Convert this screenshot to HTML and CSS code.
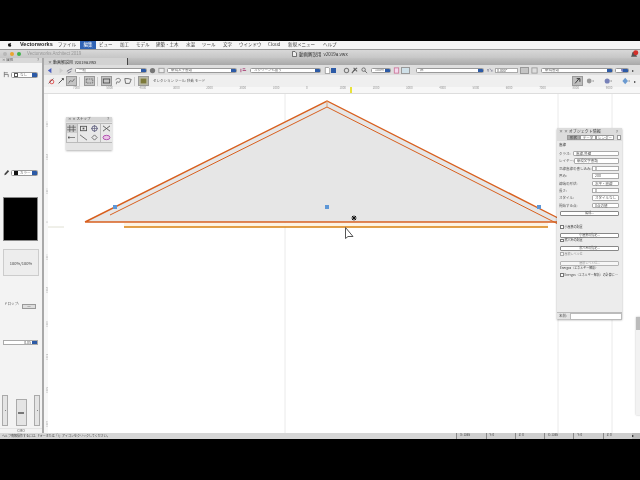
FILE: index.html
```html
<!DOCTYPE html>
<html lang="ja">
<head>
<meta charset="utf-8">
<title>Vectorworks</title>
<link rel="stylesheet" href="styles.css">
</head>
<body>
<div class="app">
  <div class="menubar">
    <svg class="apple" viewBox="0 0 10 10"><path d="M7 1.500 5.400 3C4 2.400 2 3 2 5.400 2 7.600 3.400 9.500 4.300 9.300 5 9.100 5.500 9.100 6.200 9.300 7 9.500 8.200 8 8.600 6.800 7 6 7 4 8.400 3.400 7.700 2.600 6.600 2.600 5.400 3 5.500 2.200 6 1.700 7 1.500Z"/></svg>
    <span class="m-brand">Vectorworks</span>
    <span class="m w18">ファイル</span>
    <span class="m active">編集</span>
    <span class="m w14 g3">ビュー</span>
    <span class="m w9 g7">加工</span>
    <span class="m w12 g7">モデル</span>
    <span class="m w23 g8">建築・土木</span>
    <span class="m w9 g7">水温</span>
    <span class="m w14 g7">ツール</span>
    <span class="m w9 g7">文字</span>
    <span class="m w22 g7">ウインドウ</span>
    <span class="m w14 g7">Cloud</span>
    <span class="m w28 g6">新規メニュー</span>
    <span class="m w14 g7">ヘルプ</span>
  </div>
  <div class="titlebar">
    <i class="light grey"></i><i class="light amber"></i><i class="light green"></i>
    <span class="app-name">Vectorworks Architect 2019</span>
    <svg class="doc-icon" viewBox="0 0 5 6"><path d="M.5.5H3L4.500 2V5.500H.5Z" fill="#eee" stroke="#444" stroke-width=".7"/></svg>
    <span class="doc-name">動画解説用&nbsp; v2019a.vwx</span>
    <svg class="bell" viewBox="0 0 10 9"><path d="M1 7.500C2 6.500 2 4.500 2.500 3 3 1.500 6 1.500 6.500 3 7 4.500 7 6.500 8 7.500Z" fill="#555"/><circle cx="6.500" cy="3" r="2.800" fill="#d3302a"/></svg>
  </div>
  <div class="main">
    <aside class="attrs">
      <div class="panel-title"><span>× 属性</span><span>?</span></div>
      <div class="attr-row first">
        <svg class="attr-icon" viewBox="0 0 7 8"><path d="M1 1V7M1 4H5.500V7M1 2H5" fill="none" stroke="#666" stroke-width=".8"/></svg>
        <span class="select"><i class="mini-white"></i><span>なし</span><b></b></span>
      </div>
      <div class="attr-row pen">
        <svg class="attr-icon" viewBox="0 0 7 8"><path d="M1 7 1.500 5 5 1 6.500 2.500 2.800 6.500Z" fill="#444"/></svg>
        <span class="select"><i class="mini-black"></i><span>カラー</span><b></b></span>
      </div>
      <div class="swatch"></div>
      <div class="preview">100%/100%</div>
      <div class="drop"><span>ドロップ:</span><span class="drop-box">一</span></div>
      <div class="opacity"><span>0.05</span><b></b></div>
      <div class="sliders">
        <span class="slider s-side"><i></i></span>
        <span class="slider s-mid"><i></i></span>
        <span class="slider s-side"><i></i></span>
      </div>
      <div class="cmo">CMO</div>
    </aside>
    <div class="divider"></div>
    <div class="workspace">
      <div class="tabs">
        <span class="tab">× 動画解説用&nbsp; v2019a.vwx</span>
      </div>
      <div class="bar1">
        <svg class="ic ml3" viewBox="0 0 8 8"><path d="M1 4 5 1V7Z" fill="#4a5fc0"/></svg>
        <svg class="ic ml3" viewBox="0 0 8 8"><path d="M7 4 3 1V7Z" fill="#ccc"/></svg>
        <svg class="ic ml2" viewBox="0 0 8 8"><path d="M1 5 4 3 7 2M2 7 6 5" stroke="#667" fill="none"/></svg>
        <span class="select sel1"><span>一般</span><b></b></span>
        <svg class="ic ml2" viewBox="0 0 8 8"><circle cx="4" cy="4" r="3" fill="#777"/></svg>
        <svg class="ic ml2" viewBox="0 0 8 8"><rect x="1" y="1.500" width="6" height="5" fill="#eee" stroke="#999"/></svg>
        <span class="select sel2"><span>新規文字書類</span><b></b></span>
        <svg class="ic ml3" viewBox="0 0 8 8"><path d="M1 2V6M3 2 6 2M3 4H7" stroke="#a47" stroke-width="1"/></svg>
        <span class="select sel3"><span>スクリーン七面り</span><b></b></span>
        <svg class="ic ml3" viewBox="0 0 8 8"><path d="M1.500.5H5L6.500 2V7.500H1.500Z" fill="#fff" stroke="#777" stroke-width=".7"/></svg>
        <b class="blue-btn"></b>
        <svg class="ic ml7" viewBox="0 0 8 8"><circle cx="4" cy="4" r="2.500" fill="none" stroke="#777" stroke-width="1.200"/></svg>
        <svg class="ic ml1" viewBox="0 0 8 8"><path d="M1 7 4 3 7 1M3 1 7 5" stroke="#666" stroke-width="1.200"/></svg>
        <svg class="ic ml3" viewBox="0 0 8 8"><circle cx="3" cy="3" r="2" fill="none" stroke="#666"/><path d="M4.500 4.500 7 7" stroke="#666"/></svg>
        <span class="select sel4"><span>100%</span><b></b></span>
        <svg class="ic ml2" viewBox="0 0 8 8"><rect x="1.500" y="1" width="5" height="6" fill="#f4d9ee" stroke="#c79"/></svg>
        <span class="hl hl-blue"></span>
        <span class="select sel5"><span>床</span><b></b></span>
        <span class="yz">Y↘</span>
        <span class="field f23">0.000"</span>
        <span class="hl toggle"></span>
        <svg class="ic ml2" viewBox="0 0 8 8"><rect x="1" y="1" width="6" height="6" fill="none" stroke="#999"/></svg>
        <span class="select sel6"><span>新規書類</span><b></b></span>
        <span class="select sel7"><i class="purple"></i><b></b></span>
        <span class="more">▸</span>
      </div>
      <div class="bar2">
        <svg class="ic2 ml3" viewBox="0 0 10 10"><path d="M2 8 8 2" stroke="#444"/><circle cx="6" cy="6" r="2.500" fill="none" stroke="#d33"/></svg>
        <svg class="ic2 ml2" viewBox="0 0 10 10"><path d="M2 8 8 2M6 2H8V4" stroke="#333" fill="none"/></svg>
        <span class="hl tool"><svg viewBox="0 0 10 10"><path d="M1 8 4 4 6 6 9 2" stroke="#444" stroke-dasharray="1.500 .7" fill="none"/></svg></span>
        <span class="sep sep-wide"></span>
        <span class="hl tool wide"><svg viewBox="0 0 10 10"><rect x="1" y="2.500" width="8" height="5" fill="none" stroke="#666" stroke-dasharray="2 1"/></svg></span>
        <span class="sep"></span>
        <span class="hl tool"><svg viewBox="0 0 10 10"><rect x="1" y="2.500" width="8" height="5" fill="none" stroke="#444"/></svg></span>
        <svg class="ic2 ml2" viewBox="0 0 10 10"><path d="M2 4C3 1 8 1 8 4S5 7 4 6 3 9 3 9" fill="none" stroke="#666"/></svg>
        <svg class="ic2 ml2" viewBox="0 0 10 10"><path d="M1 2H5L9 3 7 8H2Z" fill="none" stroke="#555"/></svg>
        <span class="sep"></span>
        <span class="hl tool olive"><svg viewBox="0 0 10 10"><rect x="1.500" y="2" width="7" height="6" fill="#7d7a3a"/></svg></span>
        <span class="mode">セレクション ツール: 移動 モード</span>
        <span class="hl tool right-first"><svg viewBox="0 0 10 10"><path d="M2 8 7 2M4 2H8L8 6" stroke="#222" fill="none"/></svg></span>
        <svg class="ic2 ml3" viewBox="0 0 10 10"><circle cx="4" cy="5" r="3" fill="#999"/><path d="M8 5H10" stroke="#777"/></svg>
        <svg class="ic2 ml8" viewBox="0 0 10 10"><circle cx="4" cy="5" r="3.200" fill="#7781b8"/><path d="M8 5H10" stroke="#777"/></svg>
        <svg class="ic2 ml8" viewBox="0 0 10 10"><path d="M4 1 7.500 5 4 9 .5 5Z" fill="#6b9ad0"/><path d="M8 5H10" stroke="#777"/></svg>
        <span class="more more2">▸</span>
      </div>
      <div class="ruler">
        <span>7000</span><span>5000</span><span>4000</span><span>3000</span><span>2000</span><span>3000</span><span>1000</span><span>0</span><span>1000</span><span>2000</span><span>3000</span><span>4000</span><span>5000</span><span>6000</span><span>7000</span><span>8000</span><span>9000</span>
        <i class="ruler-mark"></i>
      </div>
      <div class="canvas-row">
        <div class="vruler">
          <span>1000</span><span>2000</span><span>1000</span><span>0</span><span>1000</span><span>2000</span><span>3000</span><span>4000</span><span>5000</span><span>6000</span>
        </div>
        <div class="canvas">
          <svg class="drawing" viewBox="48 94 592 339">
            <path d="M285 94V433M558 94V433M612 94V433" stroke="#e4e4e4" stroke-width=".8" fill="none"/>
            <path d="M48 227H64" stroke="#d8d8c8" stroke-width=".8"/>
            <path d="M85 222 327 101 560 219V222Z" fill="#e6e6e6"/>
            <path d="M85 222 327 101 560 219M85 222H560" fill="none" stroke="#d8601f" stroke-width="1.400"/>
            <path d="M110 215 327 107 558 224" fill="none" stroke="#d8601f" stroke-width="1"/>
            <path d="M327 101V107" stroke="#e3a070" stroke-width="1"/>
            <rect x="124" y="223" width="424" height="4" fill="#fdf3e3"/>
            <path d="M124 227H548" stroke="#d9820f" stroke-width="1.400"/>
            <rect x="113" y="205" width="4" height="4" fill="#5e97d6"/>
            <rect x="325" y="205" width="4" height="4" fill="#5e97d6"/>
            <rect x="537" y="205" width="4" height="4" fill="#5e97d6"/>
            <path d="M352 216 356 220M356 216 352 220M354 215.500V220.500M351.500 218H356.500" stroke="#111" stroke-width="1"/>
            <path d="M345.500 227.500V238.500L348 236.500 353 236.500Z" fill="#fff" stroke="#555" stroke-width="1"/>
          </svg>
          <span class="v-mark"></span>
          <section class="snap">
            <div class="snap-title"><span>× × スナップ</span><span>?</span></div>
            <div class="snap-grid">
              <span class="cell on"><svg viewBox="0 0 10 8"><path d="M3 0V8M7 0V8M0 2.500H10M0 5.500H10" stroke="#555" stroke-width=".8"/></svg></span>
              <span class="cell"><svg viewBox="0 0 10 8"><rect x="1.500" y="1.500" width="7" height="5" fill="none" stroke="#555"/><rect x="4" y="3" width="2" height="2" fill="#555"/></svg></span>
              <span class="cell"><svg viewBox="0 0 10 8"><circle cx="5" cy="4" r="3" fill="none" stroke="#557"/><path d="M5 0V8M1 4H9" stroke="#557" stroke-width=".7"/></svg></span>
              <span class="cell"><svg viewBox="0 0 10 8"><path d="M1 1 9 7M9 1 1 7" stroke="#555"/></svg></span>
              <span class="cell"><svg viewBox="0 0 10 8"><rect x="1" y="3" width="2" height="2" fill="#555"/><path d="M3 4H9" stroke="#777"/></svg></span>
              <span class="cell"><svg viewBox="0 0 10 8"><path d="M1 1 9 7" stroke="#666"/></svg></span>
              <span class="cell"><svg viewBox="0 0 10 8"><path d="M5 1 8 4 5 7 2 4Z" fill="none" stroke="#666"/></svg></span>
              <span class="cell"><svg viewBox="0 0 10 8"><ellipse cx="5" cy="4" rx="4" ry="2.500" fill="#eac5e6" stroke="#a4a"/></svg></span>
            </div>
          </section>
          <section class="oip">
            <div class="oip-title"><span>× × オブジェクト情報</span><span>?</span></div>
            <div class="oip-tabs"><span class="sel">形状</span><span>データ</span><span>レンダー</span><i class="oip-square"></i></div>
            <div class="oip-body">
              <div class="oip-head">直線</div>
              <div class="row"><label>クラス:</label><span class="pop w-long">直線-外壁</span></div>
              <div class="row"><label>レイヤー:</label><span class="pop w-long">新規文字書類</span></div>
              <div class="row"><label>芯線直線の書し込み:</label><span class="inp w-mid">0</span></div>
              <div class="row"><label>厚み:</label><span class="inp w-mid">200</span></div>
              <div class="row"><label>線端の形状:</label><span class="pop w-mid">水平・直線</span></div>
              <div class="row"><label>長さ:</label><span class="inp w-mid">0</span></div>
              <div class="row"><label>スタイル:</label><span class="pop w-mid">スタイルなし</span></div>
              <div class="row"><label>開始する点:</label><span class="pop w-mid">0点の値</span></div>
              <div class="btn">編成...</div>
              <div class="check chk-first"><i></i>小屋裏の配置</div>
              <div class="btn btn-tight">小屋裏の指定...</div>
              <div class="check"><i></i>窓穴あの配置</div>
              <div class="btn btn-tight">窓穴あの指定...</div>
              <div class="check dim"><i></i>屋根レベル位</div>
              <div class="btn btn-tight btn-last dim">屋根レベル位...</div>
              <div class="energos">Energos（エネルギー解析）</div>
              <div class="check"><i></i>Energos（エネルギー解析）の計算に…</div>
              <div class="name-row"><label>名前:</label><span class="name-input"></span></div>
            </div>
          </section>
          <section class="peek"></section>
        </div>
      </div>
    </div>
  </div>
  <div class="status">
    <span class="hint">ヘルプ情報操作するには、Fキーまたは「?」アイコンをクリックしてください。</span>
    <span class="coords">
      <span>X: 1365</span><span>Y: 0</span><span>Z: 0</span><span>X: 1365</span><span>Y: 0</span><span>Z: 0</span><b>▸</b>
    </span>
  </div>
</div>
</body>
</html>
```

FILE: styles.css
```css
* { box-sizing: border-box; }
html, body { margin: 0; height: 100%; background: #000; overflow: hidden; }
.app {
  margin-top: 41px;
  width: 640px;
  height: 398px;
  display: flex;
  flex-direction: column;
  font-family: "Noto Sans CJK JP", "Noto Sans", sans-serif;
  font-size: 4px;
  line-height: 1;
  color: #555;
  background: #f2f2f2;
  overflow: hidden;
  filter: blur(.35px);
}
svg { display: block; }

.menubar { height: 8px; flex: none; display: flex; align-items: center; background: #f6f6f6; font-size: 4.500px; color: #444; padding: 0 0 2px 7px; }
.apple { width: 5px; height: 5px; fill: #111; }
.m-brand { margin: 2px 0 0 8px; width: 32px; font-family: "Liberation Sans", sans-serif; font-weight: 700; font-size: 5.500px; color: #222; }
.m { margin-left: 6px; white-space: nowrap; }
.m.active { margin: 0 0 -2px 4px; background: #2f63b5; color: #fff; width: 16px; height: 8px; padding: 1px 3.500px; }
.w18 { width: 18px; } .w14 { width: 14px; } .w9 { width: 9px; } .w12 { width: 12px; }
.w23 { width: 23px; } .w22 { width: 22px; } .w28 { width: 28px; }
.m.g3 { margin-left: 3px; }
.m.g6 { margin-left: 6px; }
.m.g7 { margin-left: 7px; }
.m.g8 { margin-left: 8px; }

.titlebar { height: 9px; flex: none; display: flex; align-items: center; background: linear-gradient(#d8d8d8, #c6c6c6); border-top: 1px solid #999; padding-left: 3px; position: relative; }
.light { width: 4px; height: 4px; border-radius: 50%; margin-right: 3px; }
.grey { background: #b8b8b8; }
.amber { background: #e9a52f; }
.green { background: #3fb34a; }
.app-name { margin-left: 3px; width: 265px; color: #9a9a9a; font-size: 4.500px; font-family: "Liberation Sans", sans-serif; white-space: nowrap; }
.doc-icon { width: 5px; height: 6px; }
.doc-name { margin-left: 2px; width: 331px; color: #333; font-size: 4.500px; white-space: nowrap; }
.bell { width: 9px; height: 8px; }

.main { flex: 1; min-height: 0; display: flex; }
.attrs { width: 42px; flex: none; display: flex; flex-direction: column; background: #f3f3f3; }
.panel-title { height: 5px; display: flex; justify-content: space-between; padding: 0 3px 0 2px; background: #d8d8d8; font-size: 3.500px; color: #555; }
.attr-row { display: flex; align-items: center; padding-left: 3px; }
.attr-row.first { margin-top: 8px; }
.attr-row.pen { margin-top: 91px; }
.attr-icon { width: 7px; height: 7px; margin-right: 1px; }

.select { display: flex; align-items: center; height: 5px; background: #fff; border: .5px solid #999; border-radius: 1.500px; font-size: 3.500px; color: #666; position: relative; white-space: nowrap; padding-left: 3px; overflow: hidden; flex: none; }
.select b, .opacity b { position: absolute; right: 0; top: 0; bottom: 0; width: 5px; background: #2c5aa6; }
.attr-row .select { width: 27px; height: 6px; gap: 2px; padding-left: 2px; }
.attr-row .select b { width: 5px; }
.mini-white { width: 4px; height: 4px; border: .5px solid #555; background: #fff; }
.mini-black { width: 4px; height: 4px; background: #111; }

.swatch { margin: 21px 0 0 3px; width: 35px; height: 44px; background: #000; border: .5px solid #888; }
.preview { margin: 8px 0 0 3px; width: 36px; height: 27px; display: flex; align-items: center; justify-content: center; background: #ededed; border: 1px solid #ccc; font-size: 4px; color: #444; }
.drop { margin: 26px 0 0 4px; display: flex; align-items: flex-start; gap: 3px; font-size: 3.500px; }
.drop-box { margin-top: 2px; width: 14px; height: 5px; border: .5px solid #999; background: #ddd; text-align: center; }
.opacity { margin: 31px 0 0 3px; width: 35px; height: 5px; background: #fff; border: .5px solid #aaa; font-size: 3.500px; position: relative; text-align: right; padding-right: 6px; }
.sliders { margin: 50px 0 0 2px; width: 38px; height: 31px; display: flex; justify-content: space-between; align-items: flex-end; }
.slider { display: flex; align-items: center; justify-content: center; background: #e4e4e4; border: .7px solid #aaa; }
.s-side { width: 6px; height: 31px; }
.s-side i { width: 1px; height: 1px; background: #888; }
.s-mid { width: 11px; height: 27px; }
.s-mid i { width: 6px; height: 2px; background: #777; }
.cmo { margin-top: 2px; text-align: center; font-size: 3.500px; border-top: .5px solid #e4e4e4; }

.divider { width: 2px; flex: none; background: #a9a9a9; }
.workspace { flex: 1; min-width: 0; display: flex; flex-direction: column; }
.tabs { height: 7px; flex: none; background: linear-gradient(#c2c2c2, #a8a8a8); }
.tab { display: block; width: 84px; height: 7px; background: #d2d2d2; border-right: 1px solid #444; padding: 1.500px 0 0 4px; font-size: 4px; color: #333; white-space: nowrap; }
.bar1 { height: 10px; flex: none; display: flex; align-items: center; background: #dedede; position: relative; }
.bar2 { height: 12px; flex: none; display: flex; align-items: center; background: #efefef; }
.ic { width: 7px; height: 7px; flex: none; }
.ic2 { width: 8px; height: 8px; flex: none; }
.ml1 { margin-left: 1px; } .ml2 { margin-left: 2px; } .ml3 { margin-left: 3px; } .ml7 { margin-left: 7px; } .ml8 { margin-left: 10px; }
.sel1 { margin-left: 2px; width: 72px; }
.sel2 { margin-left: 2px; width: 70px; }
.sel3 { margin-left: 3px; width: 71px; }
.blue-btn { width: 5px; height: 5px; background: #2c5aa6; flex: none; }
.sel4 { margin-left: 3px; width: 20px; }
.sel5 { margin-left: 6px; width: 68px; }
.sel6 { margin-left: 3px; width: 72px; }
.sel7 { margin-left: 2px; width: 14px; }
.purple { width: 4px; height: 4px; border-radius: 50%; background: #7b7fc0; margin-left: 2px; }
.hl { display: flex; align-items: center; justify-content: center; background: #c4c4c4; border: .7px solid #999; flex: none; }
.hl-blue { margin-left: 1px; width: 9px; height: 7px; background: #cfe0e8; }
.yz { margin-left: 3px; width: 7px; font-size: 4px; color: #446; white-space: nowrap; }
.field { margin-left: 1px; height: 5px; background: #fff; border: .5px solid #aaa; font-size: 3.500px; padding-left: 1px; }
.f23 { width: 23px; }
.toggle { margin-left: 2px; width: 9px; height: 7px; }
.more { margin-left: 3px; font-size: 4px; color: #333; }
.tool { width: 11px; height: 10px; margin-left: 1px; }
.tool svg { width: 9px; height: 8px; }
.tool.wide { margin-left: 0; width: 11px; }
.tool.olive { background: #b8b8a4; }
.sep { width: 1px; height: 9px; background: #ccc; margin: 0 2px; flex: none; }
.sep-wide { margin-right: 4px; }
.mode { margin-left: 4px; width: 418px; font-size: 3.500px; white-space: nowrap; color: #555; }
.right-first { background: #bdbdbd; }
.more2 { margin-left: 4px; }

.ruler { height: 7px; flex: none; background: #f7f7f7; display: flex; padding-left: 29px; font-size: 3px; color: #999; position: relative; border-bottom: .5px solid #ddd; }
.ruler span { width: 33.300px; flex: none; }
.ruler-mark { position: absolute; left: 306px; top: 0; width: 2px; height: 6px; background: #e8e23a; }
.canvas-row { flex: 1; min-height: 0; display: flex; }
.vruler { width: 4px; flex: none; background: #f7f7f7; display: flex; flex-direction: column; padding-top: 27px; }
.vruler span { height: 33.300px; flex: none; font-size: 2.500px; color: #999; writing-mode: vertical-rl; white-space: nowrap; overflow: hidden; }
.canvas { flex: 1; position: relative; background: #fff; overflow: hidden; }
.drawing { position: absolute; inset: 0; width: 592px; height: 339px; }
.v-mark { position: absolute; left: -4px; top: 131px; width: 4px; height: 4px; background: #e8e23a; }

.snap { position: absolute; left: 18px; top: 23px; width: 46px; height: 33px; background: #e4e4e4; box-shadow: 0 1px 2px rgba(0,0,0,.3); }
.snap-title { height: 5px; display: flex; justify-content: space-between; padding: 0 3px 0 2px; font-size: 3.500px; background: #d6d6d6; color: #444; }
.snap-grid { margin: 1px 0 0; display: grid; grid-template-columns: repeat(4, 1fr); gap: .5px; background: #bbb; padding: .5px; }
.cell { height: 9px; display: flex; align-items: center; justify-content: center; background: #e8e8e8; }
.cell.on { background: #cfcfcf; }
.cell svg { width: 9px; height: 7px; }

.oip { position: absolute; left: 509px; top: 34px; width: 65px; height: 191px; background: #ececec; box-shadow: 0 1px 2px rgba(0,0,0,.35); display: flex; flex-direction: column; }
.oip-title { height: 6px; flex: none; display: flex; justify-content: space-between; padding: 1px 4px 0 2px; font-size: 4px; color: #444; background: #dcdcdc; }
.oip-tabs { height: 7px; flex: none; display: flex; align-items: center; padding-left: 10px; font-size: 3.500px; background: #dcdcdc; }
.oip-tabs span { width: 16px; height: 5.500px; border: .5px solid #999; background: #fff; text-align: center; }
.oip-tabs span.sel { background: #aaa; color: #333; width: 13px; }
.oip-tabs span:nth-child(3) { width: 18px; }
.oip-square { margin-left: 3px; width: 4px; height: 5px; border: .5px solid #999; background: #fff; }
.oip-body { flex: 1; display: flex; flex-direction: column; padding: 2px 2px 0 2px; min-height: 0; font-size: 3.500px; }
.oip-head { height: 7px; color: #333; }
.row { height: 7.400px; display: flex; align-items: center; justify-content: space-between; padding-right: 1px; color: #555; white-space: nowrap; flex: none; }
.pop, .inp { display: block; height: 5.500px; background: #fff; border: .5px solid #aaa; padding-left: 2px; font-size: 3.500px; }
.pop { border-radius: 1px; }
.w-long { width: 46px; }
.w-mid { width: 27px; }
.btn { height: 5px; margin: 2px 1px 3px 1px; background: #fff; border: .5px solid #888; border-radius: 1px; text-align: center; font-size: 3px; flex: none; }
.btn-tight { margin: 2.500px 1px 0 1px; }
.btn-last { margin-top: 3.500px; }
.check { display: flex; align-items: center; gap: 1px; height: 6px; padding-left: 1px; white-space: nowrap; flex: none; font-size: 3px; color: #444; }
.check i { width: 3.500px; height: 3.500px; background: #fff; border: .5px solid #777; flex: none; }
.chk-first { margin-top: 5px; }
.dim { opacity: .55; }
.energos { height: 5px; margin-top: 1.500px; padding-left: 1px; font-size: 3px; color: #333; flex: none; white-space: nowrap; }
.name-row { margin: auto -2px 0; height: 7px; display: flex; align-items: center; gap: 3px; padding-left: 2px; background: #e4e4e4; border-top: .5px solid #bbb; flex: none; }
.name-row label { width: 8px; }
.name-input { flex: 1; height: 7px; background: #fff; border: .5px solid #bbb; }
.peek { position: absolute; left: 588px; top: 223px; width: 6px; height: 98px; background: linear-gradient(#bbb 0, #bbb 13px, #f2f2f2 13px); box-shadow: 0 0 2px rgba(0,0,0,.3); }

.status { height: 6px; flex: none; display: flex; align-items: center; justify-content: space-between; background: #d6d6d6; font-size: 3px; color: #444; padding-left: 2px; white-space: nowrap; }
.coords { display: flex; }
.coords span { width: 29.300px; height: 6px; border-left: .7px solid #888; background: #cfcfcf; padding: 1px 0 0 3px; }
.coords b { width: 8px; font-size: 3.500px; background: #bbb; color: #111; font-weight: 400; padding-top: 1px; }
```
